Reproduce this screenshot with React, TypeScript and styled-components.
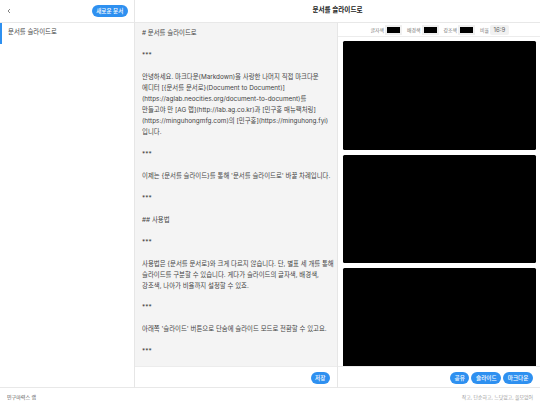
import React from "react";
import styled, { createGlobalStyle } from "styled-components";

const Global = createGlobalStyle`
  html, body { margin: 0; padding: 0; background: #fff; }
  body { font-family: "Inter", "Noto Sans CJK KR", sans-serif; color: #333; }
  * { box-sizing: border-box; }
`;
const Page = styled.div`
  width: 540px; height: 405px; display: flex; flex-direction: column; overflow: hidden;
`;
const Main = styled.div`
  height: 388px; flex: none; display: grid; grid-template-columns: 135px 405px; grid-template-rows: 388px;
  border-bottom: 1px solid #e8e8e8;
`;
const Sidebar = styled.aside`
  border-right: 1px solid #e6e6e6; display: flex; flex-direction: column;
`;
const SideHead = styled.div`
  height: 23px; border-bottom: 1px solid #e8e8e8; display: flex; align-items: center;
  justify-content: space-between; padding: 0 6px 0 7px;
`;
const Pill = styled.span`
  height: 12px; padding: 0 4.6px; border-radius: 6px; background: #2e90f0; color: #fff;
  font-size: 5.6px; font-weight: 500; line-height: 12px; white-space: nowrap; display: inline-block;
`;
const DocItem = styled.div`
  height: 21px; border-left: 2px solid #2e90f0; padding: 4px 0 0 6px; font-size: 6.4px; color: #444; line-height: 11px;
`;
const Center = styled.section`
  display: flex; flex-direction: column; min-width: 0; min-height: 0;
`;
const Title = styled.header`
  height: 23px; flex: none; border-bottom: 1px solid #e8e8e8; display: flex; align-items: center; justify-content: center;
  font-size: 6.6px; font-weight: 700; color: #222; padding-bottom: 5px;
`;
const Panes = styled.div`
  flex: 1; display: grid; grid-template-columns: 203px 202px; grid-template-rows: minmax(0, 1fr); min-height: 0;
`;
const EditorPane = styled.div`
  border-right: 1px solid #e6e6e6; display: flex; flex-direction: column; min-height: 0;
`;
const Editor = styled.div`
  flex: 1; background: #f4f4f4; padding: 5px 5px 0 7px; overflow: hidden; min-height: 0;
`;
const Para = styled.p`
  margin: 0; font-size: 6.4px; line-height: 10.98px; color: #444; white-space: pre;
`;
const Gap = styled.div`
  height: 10.98px;
`;
const Footer = styled.div`
  height: 22px; flex: none; border-top: 1px solid #ececec; display: flex; justify-content: flex-end; align-items: center; gap: 2px;
  padding: 1px 7px 0;
`;
const PreviewPane = styled.div`
  display: flex; flex-direction: column; min-height: 0;
`;
const Controls = styled.div`
  height: 14px; flex: none; border-bottom: 1px solid #ececec; display: flex; align-items: center; justify-content: flex-end; gap: 5px;
  padding: 0 31px 0 0;
`;
const Control = styled.label`
  display: flex; align-items: center; gap: 1px; font-size: 4.9px; color: #777; white-space: nowrap;
`;
const Swatch = styled.span`
  width: 17px; height: 10px; border: 2px solid #f0f0f0; background: #000; display: block;
`;
const Ratio = styled.span`
  width: 19px; text-align: center; font-size: 6.1px; color: #666; background: #f1f1f1; border-radius: 2px; line-height: 10px;
`;
const Slides = styled.div`
  flex: 1; padding: 4px 5px 0 5px; display: flex; flex-direction: column; gap: 5px; overflow: hidden; min-height: 0;
`;
const Slide = styled.div`
  width: 192.5px; height: 108.5px; background: #000; border-radius: 1.5px; flex: none;
`;
const BottomBar = styled.footer`
  flex: 1; display: flex; align-items: center; justify-content: space-between;
  padding: 0 7px;
`;
const Credit = styled.span`
  font-size: 5px; color: #555;
`;
const Tagline = styled.span`
  font-size: 4.9px; color: #999;
`;

const lines1 = [
  "안녕하세요. 마크다운(Markdown)을 사랑한 나머지 직접 마크다운",
  "에디터 [{문서를 문서로}(Document to Document)]",
  "(https://aglab.neocities.org/document-to-document)를",
  "만들고야 만 [AG 랩](http://lab.ag.co.kr)과 [민구홍 매뉴팩처링]",
  "(https://minguhongmfg.com)의 [민구홍](https://minguhong.fyi)",
  "입니다.",
];

export default function App() {
  return (
    <Page>
      <Global />
      <Main>
        <Sidebar>
          <SideHead>
            <svg width="4" height="6" viewBox="0 0 4 6"><path d="M3 1 1 3l2 2" fill="none" stroke="#666" strokeWidth="0.8" /></svg>
            <Pill>새로운 문서</Pill>
          </SideHead>
          <DocItem>문서를 슬라이드로</DocItem>
        </Sidebar>
        <Center>
          <Title>문서를 슬라이드로</Title>
          <Panes>
            <EditorPane>
              <Editor>
                <Para># 문서를 슬라이드로</Para>
                <Gap />
                <Para>***</Para>
                <Gap />
                {lines1.map((l) => <Para key={l}>{l}</Para>)}
                <Gap />
                <Para>***</Para>
                <Gap />
                <Para>이제는 {"{문서를 슬라이드}"}를 통해 '문서를 슬라이드로' 바꿀 차례입니다.</Para>
                <Gap />
                <Para>***</Para>
                <Gap />
                <Para>## 사용법</Para>
                <Gap />
                <Para>***</Para>
                <Gap />
                <Para>사용법은 {"{문서를 문서로}"}와 크게 다르지 않습니다. 단, 별표 세 개를 통해</Para>
                <Para>슬라이드를 구분할 수 있습니다. 게다가 슬라이드의 글자색, 배경색,</Para>
                <Para>강조색, 나아가 비율까지 설정할 수 있죠.</Para>
                <Gap />
                <Para>***</Para>
                <Gap />
                <Para>아래쪽 '슬라이드' 버튼으로 단숨에 슬라이드 모드로 전환할 수 있고요.</Para>
                <Gap />
                <Para>***</Para>
              </Editor>
              <Footer><Pill>저장</Pill></Footer>
            </EditorPane>
            <PreviewPane>
              <Controls>
                <Control>글자색 <Swatch /></Control>
                <Control>배경색 <Swatch /></Control>
                <Control>강조색 <Swatch /></Control>
                <Control>비율 <Ratio>16:9</Ratio></Control>
              </Controls>
              <Slides>
                <Slide /><Slide /><Slide />
              </Slides>
              <Footer>
                <Pill>공유</Pill><Pill>슬라이드</Pill><Pill>마크다운</Pill>
              </Footer>
            </PreviewPane>
          </Panes>
        </Center>
      </Main>
      <BottomBar>
        <Credit>민구마력스 랩</Credit>
        <Tagline>작고, 단순하고, 느닷없고, 쓸모없어</Tagline>
      </BottomBar>
    </Page>
  );
}
